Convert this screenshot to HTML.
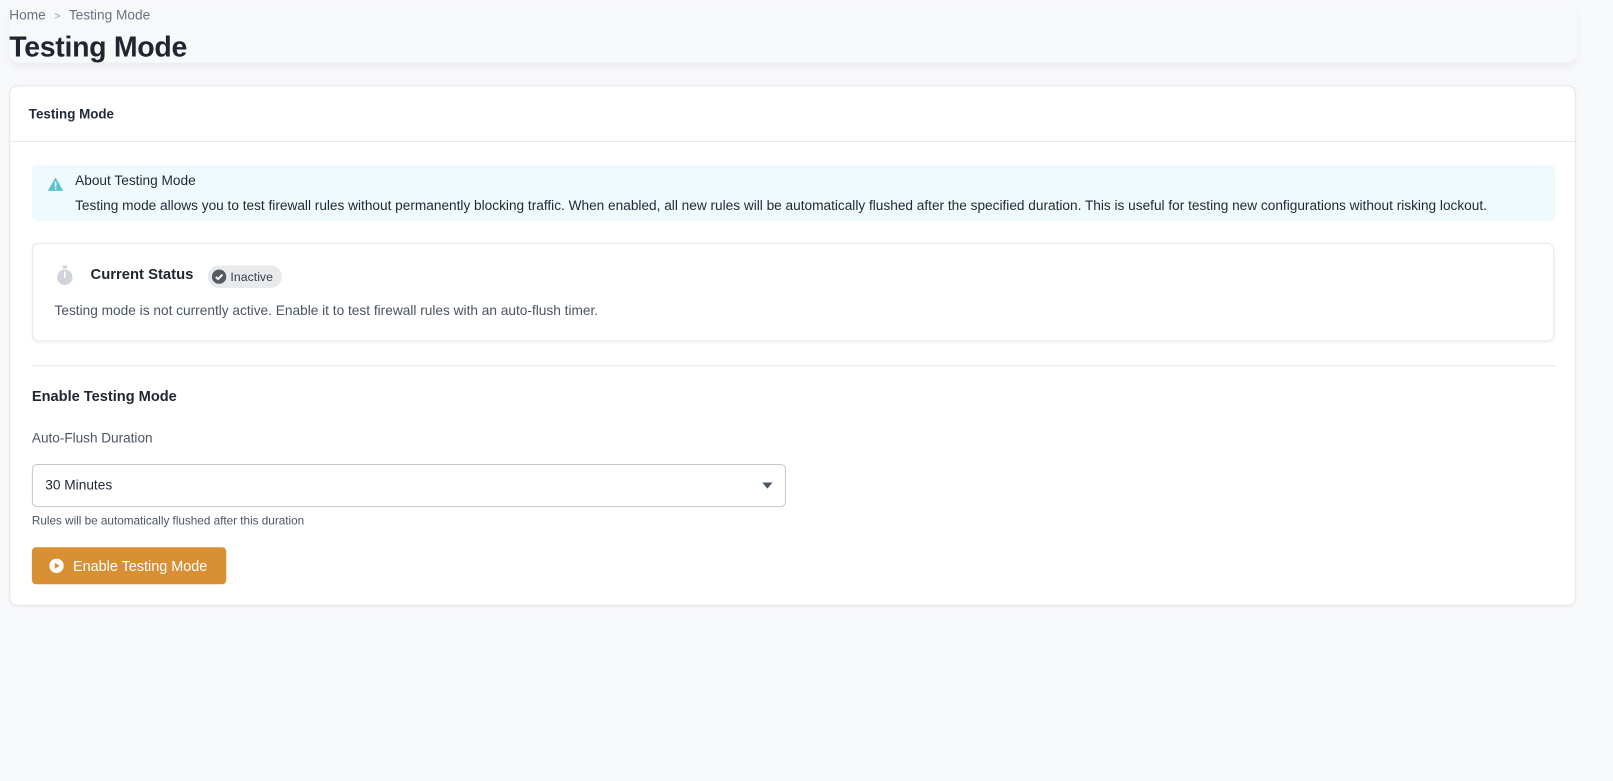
<!DOCTYPE html>
<html><head><meta charset="utf-8">
<style>
*{box-sizing:border-box;margin:0;padding:0}
html,body{width:1613px;height:781px;background:#f8f9fb;font-family:"Liberation Sans",sans-serif;color:#1f2937;overflow:hidden;position:relative}
#w{position:absolute;left:0;top:0;width:1568px;height:760px;transform:scale(1.0287);transform-origin:0 0}
.hdr{position:absolute;left:9px;top:6px;width:1524px;height:55px;background:#f7f8fa;border-radius:10px;box-shadow:0 4px 10px rgba(0,0,0,0.06)}
.bc{position:absolute;left:9px;top:7px;font-size:13.3px;color:#6b7280}
.bc span.sep{margin:0 8px;color:#9ca3af;font-size:11px}
.title{position:absolute;left:9px;top:30px;font-size:27.7px;font-weight:bold;color:#1f2630;letter-spacing:-0.3px}
.card{position:absolute;left:9px;top:83px;width:1523px;height:506px;background:#fff;border:1px solid #e5e7eb;border-radius:8px;box-shadow:0 1px 3px rgba(0,0,0,0.05)}
.ct{position:absolute;left:18px;top:19px;font-size:13px;font-weight:bold;color:#1f2937}
.sepl{position:absolute;left:0;right:0;top:53px;border-top:1px solid #e5e7eb}
.alert{position:absolute;left:21px;top:76px;width:1481px;height:55px;background:#f0f9fc;border-radius:5px}
.alert .h{position:absolute;left:42px;top:8px;font-size:13.3px;color:#1f2937}
.alert .b{position:absolute;left:42px;top:32px;font-size:13.28px;color:#1f2937}
.alert svg{position:absolute;left:15px;top:12px}
.status{position:absolute;left:21px;top:152px;width:1480px;height:96px;border:1px solid #e5e7eb;border-radius:7px;box-shadow:0 1px 3px rgba(0,0,0,0.05)}
.status .h{position:absolute;left:56px;top:22px;font-size:14.4px;font-weight:bold;color:#1f2630}
.badge{position:absolute;left:170px;top:21px;height:22px;width:72px;background:#e9eaec;border-radius:11px;font-size:12px;color:#374151;padding-left:22px;line-height:22px}
.badge svg{position:absolute;left:4px;top:4px}
.status .d{position:absolute;left:21px;top:57px;font-size:13.3px;color:#4b5563}
.status .ic{position:absolute;left:22px;top:21px}
.div2{position:absolute;left:21px;width:1481px;top:271px;border-top:1px solid #e5e7eb}
.eh{position:absolute;left:21px;top:294px;font-size:14.2px;font-weight:bold;color:#1f2630}
.lab{position:absolute;left:21px;top:334px;font-size:13.2px;color:#4b5563}
.sel{position:absolute;left:21px;top:367px;width:733px;height:42px;border:1px solid #c4c8cd;border-radius:5px;font-size:13.3px;color:#1f2937;padding:12px 0 0 12px}
.sel svg{position:absolute;right:12px;top:17px}
.help{position:absolute;left:21px;top:417px;font-size:11.4px;color:#4b5563}
.btn{position:absolute;left:21px;top:448px;width:189px;height:36px;background:#d99034;border-radius:4px;color:#fff;font-size:14px;padding:10px 0 0 40px}
.btn svg{position:absolute;left:17px;top:11px}
</style></head><body>
<div id="w">
<div class="hdr"></div>
<div class="bc">Home<span class="sep">&gt;</span>Testing Mode</div>
<div class="title">Testing Mode</div>
<div class="card">
  <div class="ct">Testing Mode</div>
  <div class="sepl"></div>
  <div class="alert">
    <svg width="16" height="14" viewBox="0 0 16 14"><path d="M8 0.5 L15.5 13.5 H0.5 Z" fill="#5bc0d2"/><rect x="7.2" y="4.5" width="1.6" height="5" fill="#fff"/><rect x="7.2" y="10.5" width="1.6" height="1.6" fill="#fff"/></svg>
    <div class="h">About Testing Mode</div>
    <div class="b">Testing mode allows you to test firewall rules without permanently blocking traffic. When enabled, all new rules will be automatically flushed after the specified duration. This is useful for testing new configurations without risking lockout.</div>
  </div>
  <div class="status">
    <svg class="ic" width="18" height="20" viewBox="0 0 18 20"><rect x="7" y="0" width="4" height="3" fill="#d1d5db"/><circle cx="9" cy="11.5" r="7.5" fill="#d1d5db"/><rect x="8.2" y="6" width="1.6" height="6" fill="#fff"/></svg>
    <div class="h">Current Status</div>
    <div class="badge"><svg width="14" height="14" viewBox="0 0 14 14"><circle cx="7" cy="7" r="7" fill="#555b63"/><path d="M3.8 7.2 L6 9.3 L10.2 4.9" stroke="#fff" stroke-width="1.8" fill="none"/></svg>Inactive</div>
    <div class="d">Testing mode is not currently active. Enable it to test firewall rules with an auto-flush timer.</div>
  </div>
  <div class="div2"></div>
  <div class="eh">Enable Testing Mode</div>
  <div class="lab">Auto-Flush Duration</div>
  <div class="sel">30 Minutes<svg width="10" height="6" viewBox="0 0 10 6"><path d="M0 0 H10 L5 6 Z" fill="#4b5563"/></svg></div>
  <div class="help">Rules will be automatically flushed after this duration</div>
  <div class="btn"><svg width="14" height="14" viewBox="0 0 14 14"><circle cx="7" cy="7" r="7" fill="#fff"/><path d="M5.3 4 L10 7 L5.3 10 Z" fill="#d99034"/></svg>Enable Testing Mode</div>
</div>
</div>
</body></html>
